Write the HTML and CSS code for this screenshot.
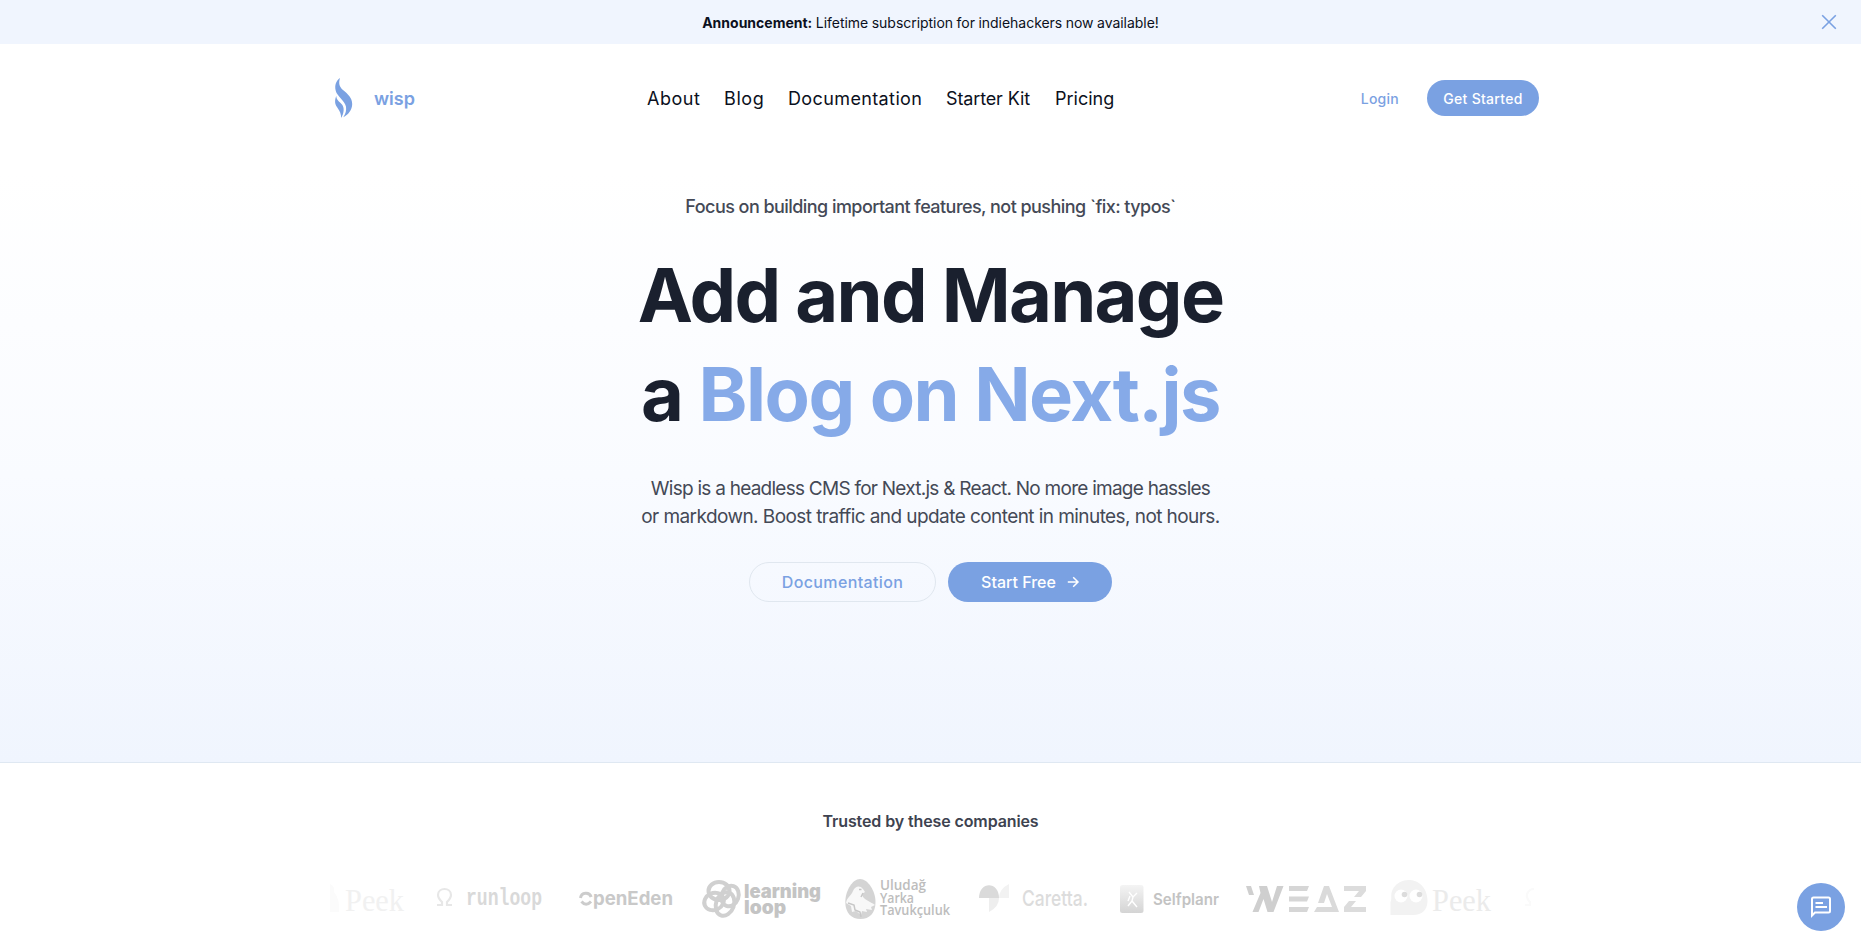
FILE: index.html
```html
<!DOCTYPE html>
<html lang="en">
<head>
<meta charset="utf-8">
<title>wisp</title>
<link rel="stylesheet" href="styles.css">
</head>
<body>
<div class="announcement">
  <p><b>Announcement:</b> <span>Lifetime subscription for indiehackers now available!</span></p>
  <button class="close" aria-label="Close"><svg width="16" height="16" viewBox="0 0 16 16"><path d="M1.2 1.2 14.8 14.8M14.8 1.2 1.2 14.8"/></svg></button>
</div>
<section class="hero">
  <header class="header">
    <a class="brand">
      <svg width="18" height="40" viewBox="0 0 18 40"><path d="M5 0C3.500 5 4 8.500 8 12c5 4.200 9.200 7.800 9.200 14C17.200 32 13 37 8.300 39.300c2.500-3.700 3.200-7 2.700-10.500C10.300 23.300 2 18 .8 13-.8 7 1.300 2.500 5 0Z"/><path d="M1.300 18c.1 4.200 3.300 5.700 5.700 8.500 2.500 3 2.200 8.500-.8 13.500C6.300 31.500.3 29.500.1 24.200 0 21.500.6 19.600 1.300 18Z"/></svg>
      <span>wisp</span>
    </a>
    <nav class="nav"><a class="w-about">About</a><a class="w-blog">Blog</a><a class="w-docs">Documentation</a><a class="w-kit">Starter Kit</a><a class="w-pricing">Pricing</a></nav>
    <div class="account"><a class="login">Login</a><a class="get-started">Get Started</a></div>
  </header>
  <div class="intro">
    <p class="tagline">Focus on building important features, not pushing `fix: typos`</p>
    <h1><span class="line-one">Add and Manage</span><span class="line-two">a <em>Blog on Next.js</em></span></h1>
    <p class="summary"><span class="sum-one">Wisp is a headless CMS for Next.js &amp; React. No more image hassles</span><span class="sum-two">or markdown. Boost traffic and update content in minutes, not hours.</span></p>
    <div class="actions">
      <a class="btn outline">Documentation</a>
      <a class="btn solid"><span>Start Free</span><svg width="12" height="12" viewBox="0 0 12 12"><path d="M.8 6h10.200M6.200 1.200 11 6l-4.800 4.800"/></svg></a>
    </div>
  </div>
</section>
<section class="trusted">
  <h2>Trusted by these companies</h2>
  <div class="logos">
    <svg class="peek-start" width="80" height="60" viewBox="330 870 80 60"><path d="M330 884q5 2 4 8 6 7 5 20h-9Z" fill="#fbfbfb"/><text x="345" y="911" class="serif" textLength="59" lengthAdjust="spacingAndGlyphs" fill="#f1f1f1">Peek</text></svg>
    <svg class="runloop" width="110" height="60" viewBox="435 870 110 60"><path d="M437 905h5v-3q-4-4-4-7c0-8 13-8 13 0q0 3-4 7v3h5" fill="none" stroke="#e7e7e7" stroke-width="2.200"/><text x="466" y="905" class="mono" textLength="76" lengthAdjust="spacingAndGlyphs" fill="#d9d9d9">runloop</text></svg>
    <svg class="openeden" width="96" height="60" viewBox="579 870 96 60"><g fill="none" stroke="#ccc" stroke-width="3"><path d="M580.500 898a5.500 5.500 0 0 1 10.700-1"/><path d="M581.500 901.500q4.500 5.500 9.500 0"/></g><text x="593" y="905" font-size="19" font-weight="700" textLength="80" lengthAdjust="spacingAndGlyphs" fill="#c9c9c9">penEden</text></svg>
    <svg class="learning" width="122" height="60" viewBox="702 870 122 60"><g fill="none" stroke="#d0d0d0" stroke-width="4"><ellipse cx="719" cy="891" rx="10.500" ry="9"/><ellipse cx="730" cy="896" rx="8.500" ry="10.500" transform="rotate(20 730 896)"/><ellipse cx="714" cy="901.500" rx="10" ry="8.500" transform="rotate(-25 714 901.500)"/><ellipse cx="725" cy="904" rx="9" ry="12" transform="rotate(20 725 904)"/></g><g font-size="19" font-weight="900" fill="#c4c4c4"><text x="744" y="898" textLength="77" lengthAdjust="spacingAndGlyphs">learning</text><text x="744" y="914" textLength="42" lengthAdjust="spacingAndGlyphs">loop</text></g></svg>
    <svg class="uludag" width="108" height="60" viewBox="845 870 108 60"><path d="M860 879c8 0 15.500 12 15.500 23 0 11-6 17-15 17s-15.200-6-15.200-17c0-11 7-23 14.700-23Z" fill="#d4d4d4"/><path d="M846 903c1-6 5-7 7-12 2-5 7-6 10-2l2 3-3 2c0 5 9 8 13 11l-4 2 1 3-6-1 1 3-5-1-1 4-5-4-4 1-1-6Z" fill="#f8f8f8"/><path d="m848 903 6 2 1 5 5 2 1 5M859 889.500h2.500M863 893l-2 4" fill="none" stroke="#c7c7c7" stroke-width="1.500"/><g class="sans" font-size="14" fill="#bdbdbd"><text x="880" y="890" textLength="46" lengthAdjust="spacingAndGlyphs">Uludağ</text><text x="880" y="902.500" textLength="34" lengthAdjust="spacingAndGlyphs">Yarka</text><text x="880" y="915" textLength="70" lengthAdjust="spacingAndGlyphs">Tavukçuluk</text></g></svg>
    <svg class="caretta" width="112" height="60" viewBox="978 870 112 60"><path d="M979 898c0-17 20-17 20 0Z" fill="#dadada"/><path d="M989 898h10q0 9-10 14Z" fill="#eee"/><path d="M999 898q0-9 10-14v14Z" fill="#f2f2f2"/><text x="1022" y="906" font-size="22" font-weight="500" textLength="66" lengthAdjust="spacingAndGlyphs" fill="#dcdcdc">Caretta.</text></svg>
    <svg class="selfplanr" width="102" height="60" viewBox="1119 870 102 60"><defs><linearGradient id="tile" x2="0" y2="1"><stop stop-color="#f4f4f4"/><stop offset="1" stop-color="#d4d4d4"/></linearGradient></defs><rect x="1120" y="885" width="23.500" height="28" rx="2.500" fill="url(#tile)"/><path d="m1129 892 4 5 4-4m-4 4-1 4 5 6m-5-6-4 5m2-10-2 5" fill="none" stroke="#fff" stroke-width="1.400"/><text x="1153" y="905" font-size="15.500" font-weight="600" textLength="66" lengthAdjust="spacingAndGlyphs" fill="#c3c3c3">Selfplanr</text></svg>
    <svg class="weaz" width="122" height="60" viewBox="1245 870 122 60" aria-label="WEAZ"><path d="M1246 886h5l3 9h-5ZM1259 886h8l5 16 5-16h6.500l-10 26h-6l-4-13-5 13h-6l8-19Z" fill="#cfcfcf"/><path d="M1289 886h20l-2 5h-18Zm0 10.500h20l-2 5h-18Zm0 10.500h20l-2 5h-18Z" fill="#d6d6d6"/><path d="m1324 886h5l10 26h-25l3-5h15l-5-13-3 9h-6Z" fill="#dadada"/><path d="M1344 886h22v5l-5 6h-7l5-6h-15Zm5 15h7l-5 6h15v5h-22v-5Z" fill="#dcdcdc"/></svg>
    <svg class="peek-end" width="104" height="60" viewBox="1390 870 104 60"><path d="M1390.500 915v-13c2-3-1-8 3-14 9-14 34-10 34 13 0 9-6 14-14 14Z" fill="#f2f2f2"/><circle cx="1401" cy="896" r="6.500" fill="#fff"/><circle cx="1416" cy="896" r="6.500" fill="#fff"/><circle cx="1404.500" cy="894.500" r="2.800" fill="#dcdcdc"/><circle cx="1419.500" cy="894.500" r="2.800" fill="#dcdcdc"/><text x="1432" y="911" class="serif" textLength="59" lengthAdjust="spacingAndGlyphs" fill="#ebebeb">Peek</text></svg>
    <svg class="runloop-end" width="12" height="60" viewBox="1524 870 12 60"><path d="M1525 905h5v-3q-4-4-3-8 2-5 7-5" fill="none" stroke="#fafafa" stroke-width="2.200"/></svg>
  </div>
</section>
<button class="chat" aria-label="Open chat"><svg width="22" height="22" viewBox="0 0 22 22"><path d="M2 19.500V3q0-1.500 1.500-1.500h15Q20 1.500 20 3v12q0 1.500-1.500 1.500H5ZM5.500 7H13M5.500 11H17"/></svg></button>
</body>
</html>
```
FILE: styles.css
```css
* { box-sizing: border-box; }
body { margin: 0; height: 947px; overflow: hidden; background: #fff; color: #0b1020; font-family: Inter, "Liberation Sans", sans-serif; }
p, h1, h2 { margin: 0; }
button { border: 0; padding: 0; background: none; }
svg { display: block; flex: none; overflow: visible; }
.announcement { position: relative; height: 44px; display: flex; justify-content: center; align-items: center; background: #f0f5fe; font-size: 14px; line-height: 20px; padding-top: 1px; }
.announcement p { white-space: nowrap; word-spacing: -.4px; }
.announcement span { letter-spacing: -.03px; }
.close { position: absolute; right: 24px; top: 14px; }
.close path { fill: none; stroke: #7aa1e2; stroke-width: 1.6; }
.hero { height: 719px; border-bottom: 1px solid #dfe8f2; background: linear-gradient(#fff 0%, #fff 18%, #f9fbff 60%, #f0f5fe 100%); }
.header { width: 1217px; height: 108px; margin: 0 auto; padding-left: 13px; display: grid; grid-template-columns: 312px 1fr auto; align-items: center; }
.brand { display: flex; align-items: center; gap: 21px; color: #7aa1e2; font-size: 18px; font-weight: 600; }
.brand path { fill: #7aa1e2; }
.nav { display: flex; gap: 24px; font-size: 18px; line-height: 28px; white-space: nowrap; padding-top: 1px; }
.w-about { width: 53px; letter-spacing: .5px; }
.w-blog { width: 40px; letter-spacing: .6px; }
.w-docs { width: 134px; letter-spacing: .38px; }
.w-kit { width: 85px; letter-spacing: -.13px; }
.w-pricing { width: 59px; }
.account { display: flex; align-items: center; gap: 28px; font-size: 14px; font-weight: 500; }
.login { color: #7aa1e2; letter-spacing: .25px; }
.get-started { width: 112px; height: 36px; border-radius: 18px; background: #7aa1e2; color: #fff; display: grid; place-items: center; letter-spacing: .28px; }
.intro { display: flex; flex-direction: column; align-items: center; padding-top: 41px; text-align: center; white-space: nowrap; }
.tagline { font-size: 18px; line-height: 28px; font-weight: 500; letter-spacing: -.552px; color: #444956; }
h1 { margin-top: 25px; font-size: 74px; line-height: 99px; font-weight: 700; color: #1a202e; }
h1 span, .summary span { display: block; }
h1 em { font-style: normal; color: #86aae8; }
.line-one { letter-spacing: -1.7px; }
.line-two { letter-spacing: -1.5px; }
.summary { margin-top: 31px; font-size: 19px; line-height: 28px; color: #444956; }
.sum-one { letter-spacing: -.748px; }
.sum-two { letter-spacing: -.571px; }
.actions { display: flex; gap: 12px; margin-top: 31px; }
.btn { height: 40px; border-radius: 20px; display: flex; align-items: center; justify-content: center; gap: 11px; font-size: 16px; font-weight: 500; }
.outline { width: 187px; border: 1px solid #e0e7ef; color: #7aa1e2; letter-spacing: .36px; }
.solid { width: 164px; background: #7aa1e2; color: #fff; }
.solid path { fill: none; stroke: #fff; stroke-width: 1.5; }
.trusted { display: flex; flex-direction: column; align-items: center; padding-top: 46px; }
.trusted h2 { font-size: 16px; line-height: 24px; font-weight: 600; letter-spacing: -.11px; color: #3e4350; }
.logos { width: 1206px; margin-top: 37px; display: flex; align-items: center; margin-left: 4px; }
.serif { font: 32px "Liberation Serif", serif; }
.mono { font: 700 23px "Liberation Mono", monospace; }
.sans { font-family: "Open Sans", sans-serif; font-weight: 600; }
.runloop { margin-left: 25px; }
.openeden { margin-left: 34px; }
.learning { margin-left: 27px; }
.uludag { margin-left: 21px; }
.caretta { margin-left: 25px; }
.selfplanr { margin-left: 29px; }
.weaz { margin-left: 24px; }
.peek-end { margin-left: 23px; }
.runloop-end { margin-left: 30px; }
.chat { position: fixed; right: 16px; bottom: 16px; width: 48px; height: 48px; border-radius: 50%; background: #7aa1e2; display: grid; place-items: center; }
.chat path { fill: none; stroke: #fff; stroke-width: 2; }
```
